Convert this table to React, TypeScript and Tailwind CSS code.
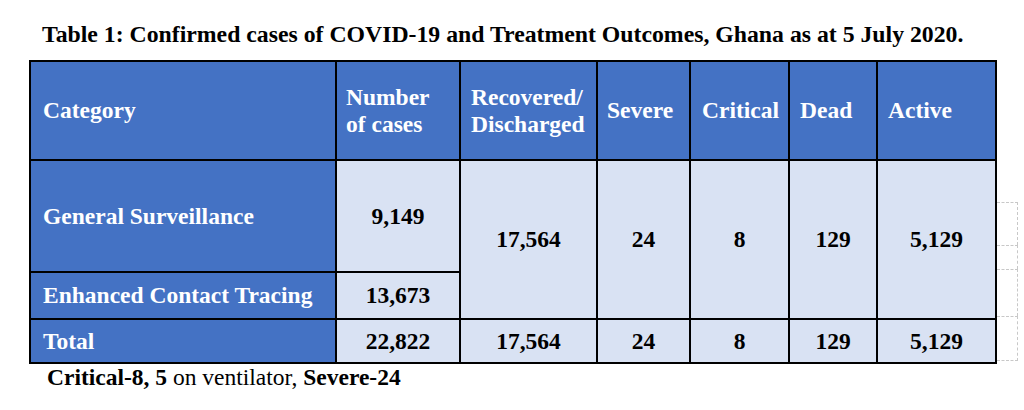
import clsx from "clsx"

const blue = "bg-[#4472c4] text-white"
const light = "bg-[#d9e2f3] text-black"
const cell = "border-2 border-black p-0"

const headers = [
  { label: "Category", pad: "pl-[12px]" },
  { label: "Number of cases", pad: "pl-[9px]", lines: ["Number", "of cases"] },
  { label: "Recovered/ Discharged", pad: "pl-[10px]", lines: ["Recovered/", "Discharged"] },
  { label: "Severe", pad: "pl-[9px]" },
  { label: "Critical", pad: "pl-[11px]" },
  { label: "Dead", pad: "pl-[10px]" },
  { label: "Active", pad: "pl-[10px]" },
]

const merged = ["17,564", "24", "8", "129", "5,129"]

// Word's hidden gridlines of the phantom column beside the table
const ghostRows = ["h-[43px]", "h-[24px]", "h-[47px]", "h-[45px]"]

const App: React.FC = () => {
  return (
    <div className="w-[1024px] h-[410px] bg-white pt-[21px] pl-[29px] font-bold text-black font-['Liberation_Serif','Times_New_Roman',serif]">
      <p className="pl-[13px] text-[23.75px] leading-[27px]">
        Table 1: Confirmed cases of COVID-19 and Treatment Outcomes, Ghana as
        at 5 July 2020.
      </p>
      <div className="flex flex-row items-start mt-[12px]">
        <table className="table-fixed border-collapse w-[966px] text-[23.5px] leading-[27px]">
          <colgroup>
            <col className="w-[306px]" />
            <col className="w-[124px]" />
            <col className="w-[137px]" />
            <col className="w-[93px]" />
            <col className="w-[99px]" />
            <col className="w-[88px]" />
            <col className="w-[119px]" />
          </colgroup>
          <tbody>
            <tr className="h-[99px]">
              {headers.map(h => (
                <td
                  key={h.label}
                  className={clsx(cell, blue, h.pad, "text-left align-middle")}
                >
                  {h.lines
                    ? h.lines.map(line => <div key={line}>{line}</div>)
                    : h.label}
                </td>
              ))}
            </tr>
            <tr className="h-[112px]">
              <td className={clsx(cell, blue, "pl-[12px] align-middle")}>
                General Surveillance
              </td>
              <td className={clsx(cell, light, "text-center align-middle")}>
                9,149
              </td>
              {merged.map((value, i) => (
                <td
                  key={i}
                  rowSpan={2}
                  className={clsx(cell, light, "text-center align-middle")}
                >
                  {value}
                </td>
              ))}
            </tr>
            <tr className="h-[47px]">
              <td className={clsx(cell, blue, "pl-[12px] align-middle")}>
                Enhanced Contact Tracing
              </td>
              <td className={clsx(cell, light, "text-center align-middle")}>
                13,673
              </td>
            </tr>
            <tr className="h-[44px]">
              <td className={clsx(cell, blue, "pl-[12px] align-middle")}>
                Total
              </td>
              <td className={clsx(cell, light, "text-center align-middle")}>
                22,822
              </td>
              {merged.map((value, i) => (
                <td
                  key={i}
                  className={clsx(cell, light, "text-center align-middle")}
                >
                  {value}
                </td>
              ))}
            </tr>
          </tbody>
        </table>
        <div className="flex flex-col mt-[142px] w-[21px]">
          {ghostRows.map((h, i) => (
            <div
              key={i}
              className={clsx(
                h,
                "border-t border-r border-dashed border-[#c8c8c8]",
                i === ghostRows.length - 1 && "border-b"
              )}
            />
          ))}
        </div>
      </div>
      <p className="pl-[18px] text-[23.5px] leading-[27px]">
        Critical-8, 5 <span className="font-normal">on ventilator,</span>{" "}
        Severe-24
      </p>
    </div>
  )
}

export default App
